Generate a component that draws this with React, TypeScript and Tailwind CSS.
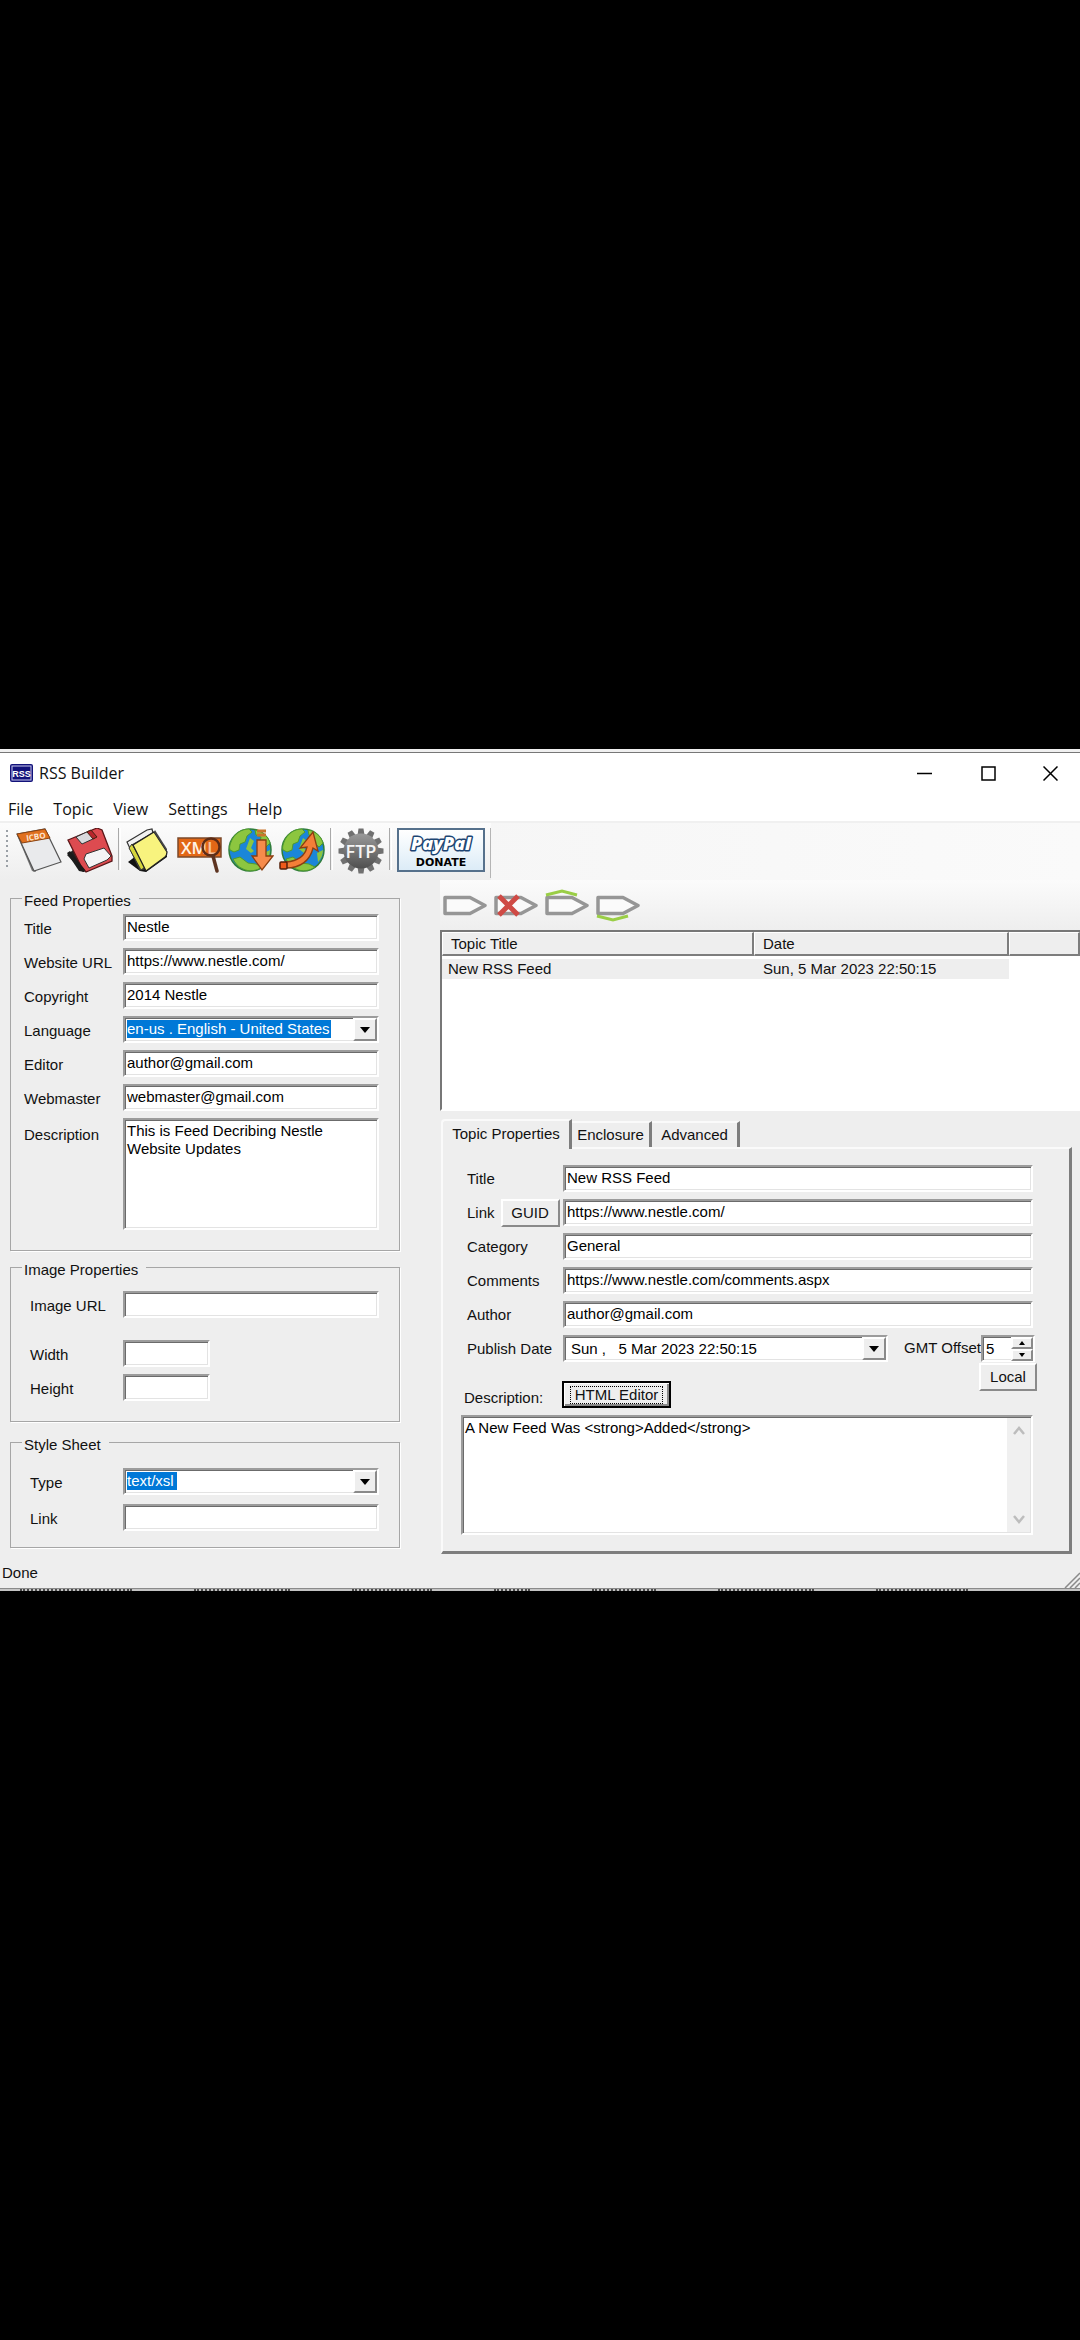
import React from "react";

const field =
  "border-2 border-t-[#9c9c9c] border-l-[#9c9c9c] border-r-white border-b-white bg-white shadow-[inset_1px_1px_0_#6b6b6b,inset_-1px_-1px_0_#e3e3e3] text-[15px] leading-[18px] text-black outline-none rounded-none";
const raised =
  "border-2 border-t-white border-l-white border-r-[#8a8a8a] border-b-[#8a8a8a] bg-[#eeeeee] flex items-center justify-center text-[15px] leading-[18px]";

function Arrow() {
  return (
    <svg width="10" height="6" viewBox="0 0 10 6" aria-hidden="true">
      <path d="M0 0h10L5 6z" fill="#000" />
    </svg>
  );
}

function Field({ id, value = "", className = "" }: { id: string; value?: string; className?: string }) {
  return <input id={id} defaultValue={value} className={`${field} block h-[27px] w-full min-w-0 px-[2px] pb-[2px] ${className}`} />;
}

function Combo({ id, value, width }: { id: string; value: string; width: string }) {
  return (
    <div className={`${field} flex h-[27px] items-start justify-between pl-[2px]`}>
      <select id={id} className={`mt-[2px] h-[18px] appearance-none bg-[#0078d7] text-[15px] leading-[18px] text-white ${width}`}>
        <option>{value}</option>
      </select>
      <button aria-label="Open list" className={`${raised} h-[23px] w-6`}>
        <Arrow />
      </button>
    </div>
  );
}

function Group({ title, className, children }: { title: string; className: string; children: React.ReactNode }) {
  return (
    <fieldset className={`border border-[#a6a6a6] pr-5 pl-[13px] shadow-[1px_1px_0_#fff] ${className}`}>
      <legend className="-ml-[2px] pt-[6px] pr-2 pl-[2px] leading-[18px]">{title}</legend>
      {children}
    </fieldset>
  );
}

const row = "grid grid-cols-[99px_minmax(0,1fr)]";
const lab = "pt-[6px] whitespace-nowrap leading-[18px]";
const labIn = "pt-[6px] pl-[6px] whitespace-nowrap leading-[18px]";

function LeftColumn() {
  return (
    <div className="w-[440px] shrink-0 pt-[6px] pr-10 pl-[10px]">
      <Group title="Feed Properties" className="pb-5">
        <div className={`${row} gap-y-[7px] pt-1`}>
          <label htmlFor="f-title" className={lab}>Title</label>
          <Field id="f-title" value="Nestle" />
          <label htmlFor="f-url" className={lab}>Website URL</label>
          <Field id="f-url" value="https://www.nestle.com/" />
          <label htmlFor="f-copy" className={lab}>Copyright</label>
          <Field id="f-copy" value="2014 Nestle" />
          <label htmlFor="f-lang" className={lab}>Language</label>
          <Combo id="f-lang" value="en-us . English - United States" width="w-[204px]" />
          <label htmlFor="f-editor" className={lab}>Editor</label>
          <Field id="f-editor" value="author@gmail.com" />
          <label htmlFor="f-web" className={lab}>Webmaster</label>
          <Field id="f-web" value="webmaster@gmail.com" />
          <label htmlFor="f-desc" className="pt-2 leading-[18px]">Description</label>
          <textarea
            id="f-desc"
            defaultValue={"This is Feed Decribing Nestle\nWebsite Updates"}
            className={`${field} block h-[112px] w-full resize-none px-[2px] pt-[2px]`}
          />
        </div>
      </Group>

      <Group title="Image Properties" className="mt-1 pb-5">
        <div className={`${row} pt-3`}>
          <label htmlFor="i-url" className={labIn}>Image URL</label>
          <Field id="i-url" />
        </div>
        <div className={`${row} gap-y-[7px] pt-[22px]`}>
          <label htmlFor="i-w" className={labIn}>Width</label>
          <Field id="i-w" className="max-w-[87px]" />
          <label htmlFor="i-h" className={labIn}>Height</label>
          <Field id="i-h" className="max-w-[87px]" />
        </div>
      </Group>

      <Group title="Style Sheet" className="mt-2 pb-4">
        <div className={`${row} gap-y-[9px] pt-[14px]`}>
          <label htmlFor="s-type" className={labIn}>Type</label>
          <Combo id="s-type" value="text/xsl" width="w-[50px]" />
          <label htmlFor="s-link" className={labIn}>Link</label>
          <Field id="s-link" />
        </div>
      </Group>
    </div>
  );
}

function Sep() {
  return <span className="h-[42px] w-[3px] shrink-0 border-r border-l border-l-[#a9a9a9] border-r-white" />;
}

function Globe() {
  return (
    <>
      <circle cx="22" cy="22" r="21" fill="#1b86d8" stroke="#2f7d3a" strokeWidth="1.5" />
      <path d="M3 14C6 6 13 1 21 1l3 3-5 4-2 6-5 2-1 6-5 2-4-2c-1-3 0-5 1-8z" fill="#8cc63f" stroke="#4f9a2e" />
      <path d="M27 2c7 1 13 6 15 13l-4 4-6-5 1-5-5-2z" fill="#8cc63f" stroke="#4f9a2e" />
      <path d="M5 31l7-2 8 6 8 1 6 3c-5 4-13 5-19 2-5-2-8-6-10-10z" fill="#8cc63f" stroke="#4f9a2e" />
      <path d="M22 10l4 3-3 7 3 3-3 2-5-4z" fill="#8cc63f" />
      <path d="M36 25l6-3c0 5-2 9-5 12z" fill="#8cc63f" />
    </>
  );
}

function Gear() {
  const teeth = [0, 30, 60, 90, 120, 150, 180, 210, 240, 270, 300, 330];
  return (
    <svg width="46" height="46" viewBox="0 0 46 46" aria-hidden="true">
      <defs>
        <linearGradient id="gear" x1="0" y1="0" x2="0" y2="1">
          <stop offset="0" stopColor="#9a9a9a" />
          <stop offset="1" stopColor="#4f4f4f" />
        </linearGradient>
      </defs>
      {teeth.map((a) => (
        <path key={a} d="M20.5 0.5h5l1 7h-7z" fill="#707070" transform={`rotate(${a} 23 23)`} />
      ))}
      <circle cx="23" cy="23" r="17.5" fill="url(#gear)" />
      <text x="23" y="29.5" textAnchor="middle" fontFamily="Open Sans, sans-serif" fontSize="18" fontWeight="600" fill="#f4f4f4">FTP</text>
    </svg>
  );
}

function Toolbar() {
  return (
    <div className="flex border-t-2 border-[#f0f0f0] bg-gradient-to-r from-[#f3f3f3] to-[#fafafa]">
      <div className="flex h-[57px] items-start gap-[5px] bg-gradient-to-b from-[#fcfcfc] to-[#eeeeee] pt-[5px] pl-[5px]">
        <svg width="6" height="44" viewBox="0 0 6 44" aria-hidden="true">
          <path d="M2 2v38" stroke="#9aa0a6" strokeWidth="2" strokeDasharray="2 3" />
        </svg>
        <button aria-label="New feed">
          <svg width="46" height="46" viewBox="0 0 46 46" aria-hidden="true">
            <path d="M1 7l4 3 15 34-4-1z" fill="#777" />
            <path d="M1 6L29 1l16 33-27 9z" fill="#e9eaec" stroke="#555" strokeWidth="1.2" />
            <path d="M1 6L29 1l5 9-28 5z" fill="#e0701f" stroke="#8a4312" strokeWidth="1" />
            <text x="10" y="12" transform="rotate(-9 17 8)" fontFamily="Open Sans, sans-serif" fontSize="8" fontWeight="700" fill="#fbe6d2">ICBO</text>
          </svg>
        </button>
        <button aria-label="Save">
          <svg width="46" height="46" viewBox="0 0 46 46" aria-hidden="true">
            <path d="M0 27l6-5 14 21-4 1z" fill="#222" />
            <path d="M1 12L30 0l5 2 10 26v5L19 44l-5-6z" fill="#dd4b50" stroke="#5a1517" strokeWidth="1.3" />
            <path d="M9 9l13-6 6 7-13 6z" fill="#d9dadd" stroke="#333" />
            <path d="M20 4l4-2 6 7-4 2z" fill="#b8262c" stroke="#421" />
            <path d="M17 31l2-5 18-6 7 8-4 4-18 8z" fill="#f4f4f6" stroke="#333" />
            <path d="M0 25l3-2 15 19-1 2-5-1z" fill="#1b1b1b" />
          </svg>
        </button>
        <Sep />
        <button aria-label="Templates">
          <svg width="46" height="46" viewBox="0 0 46 46" aria-hidden="true">
            <path d="M2 34l8-6 31-3v4L20 44l-6-1z" fill="#111" />
            <path d="M1 14L21 2l5-1 1 4-21 12 12 24-4 1z" fill="#f2f2f2" stroke="#333" strokeWidth="1.2" />
            <path d="M3 20l3-4 13 23-4 3z" fill="#d5d53c" stroke="#333" />
            <path d="M7 17L28 4l13 20c0 3-1 4-2 5L20 43z" fill="#f8f37e" stroke="#222" strokeWidth="1.3" />
            <path d="M28 4l1-2 12 19v3z" fill="#444" />
          </svg>
        </button>
        <button aria-label="View XML">
          <svg width="46" height="46" viewBox="0 0 46 46" aria-hidden="true">
            <rect x="1" y="10" width="43" height="19" fill="#e26716" stroke="#7b4a2b" strokeWidth="1.5" />
            <text x="4" y="26" fontFamily="Open Sans, sans-serif" fontSize="17" fontWeight="600" fill="#fff3e6">XML</text>
            <circle cx="34" cy="19" r="8.5" fill="#e26716" fillOpacity="0.35" stroke="#5d2c16" strokeWidth="2.5" />
            <path d="M36 28l4 15" stroke="#5d3420" strokeWidth="3.5" strokeLinecap="round" />
          </svg>
        </button>
        <button aria-label="Download feed">
          <svg width="46" height="46" viewBox="0 0 46 46" aria-hidden="true">
            <Globe />
            <path d="M29 12h9v16h7L34 42 24 28h5z" fill="#f68b4b" stroke="#8b3e10" strokeWidth="1.3" />
            <path d="M29 3h9M29 7h9" stroke="#c9742a" strokeWidth="3" />
          </svg>
        </button>
        <button aria-label="Publish feed">
          <svg width="46" height="46" viewBox="0 0 46 46" aria-hidden="true">
            <g transform="translate(2 0)"><Globe /></g>
            <path d="M7 34c12-1 19-6 21-15l-7 1L34 4l5 19-5-3c-3 13-13 20-27 20z" fill="#f47f38" stroke="#8b3e10" strokeWidth="1.3" />
            <rect x="1" y="34" width="7" height="7" rx="1" fill="#f05a1a" stroke="#54200a" strokeWidth="1.5" />
          </svg>
        </button>
        <Sep />
        <button aria-label="FTP"><Gear /></button>
        <Sep />
        <button className="flex h-11 w-[88px] flex-col items-center border-2 border-[#56718c] bg-gradient-to-b from-white to-[#dcecf7]">
          <svg width="84" height="27" viewBox="0 0 84 27" className="overflow-visible" aria-hidden="true">
            <text x="42" y="20" textAnchor="middle" fontFamily="Open Sans, sans-serif" fontSize="18" fontWeight="800" fontStyle="italic" fill="#fff" stroke="#1d4573" strokeWidth="3" paintOrder="stroke" strokeLinejoin="round">PayPal</text>
          </svg>
          <span className="font-['DejaVu_Sans',sans-serif] text-[11px] leading-3 font-bold text-black">DONATE</span>
        </button>
        <span className="h-[50px] w-px bg-[#b5b5b5]" />
      </div>
    </div>
  );
}

const tag = "M2 8.5h25l15 8-15 8H2z";

function TopicTools() {
  const tools = [
    { name: "Add topic", extra: null },
    { name: "Delete topic", extra: <path d="M5 7l19 19M24 7L5 26" stroke="#cf4a45" strokeWidth="5" fill="none" /> },
    { name: "Move topic up", extra: <path d="M1 6l16-4 15 4" stroke="#9ace46" strokeWidth="3" fill="none" /> },
    { name: "Move topic down", extra: <path d="M1 27l16 4 15-4" stroke="#9ace46" strokeWidth="3" fill="none" /> },
  ];
  return (
    <div className="flex h-[50px] items-center gap-[7px] bg-gradient-to-b from-[#fbfbfb] to-[#eeeeee] pl-[3px]">
      {tools.map((t) => (
        <button key={t.name} aria-label={t.name}>
          <svg width="44" height="33" viewBox="0 0 44 33" aria-hidden="true">
            <path d={tag} fill="#fafafa" stroke="#969696" strokeWidth="3.5" strokeLinejoin="round" />
            {t.extra}
          </svg>
        </button>
      ))}
    </div>
  );
}

const th = "h-6 border-t border-l border-r-2 border-b-2 border-t-white border-l-white border-r-[#7d7d7d] border-b-[#7d7d7d] bg-[#eeeeee] pl-2 text-left font-normal";

function TopicList() {
  return (
    <div className="h-[181px] border-t-2 border-b-2 border-l-2 border-t-[#777] border-l-[#777] border-b-white bg-white">
      <table className="w-full table-fixed border-separate border-spacing-0 leading-[18px]">
        <colgroup>
          <col className="w-[312px]" />
          <col className="w-[255px]" />
          <col />
        </colgroup>
        <thead>
          <tr>
            <th className={th}>Topic Title</th>
            <th className={th}>Date</th>
            <th aria-label="Empty" className={th} />
          </tr>
        </thead>
        <tbody>
          <tr><td className="h-[3px]" colSpan={3} /></tr>
          <tr>
            <td className="h-5 bg-[#eeeeee] pl-[6px]">New RSS Feed</td>
            <td className="bg-[#eeeeee] pl-[9px]">Sun, 5 Mar 2023 22:50:15</td>
            <td />
          </tr>
        </tbody>
      </table>
    </div>
  );
}

function Tabs() {
  const off = "h-[26px] border-t-2 border-r-[3px] border-t-[#fafafa] border-r-[#7d7d7d] pb-px text-center";
  return (
    <div role="tablist" className="flex items-end pl-px leading-[18px]">
      <button role="tab" aria-selected="true" className="relative z-10 -mb-[2px] h-[30px] w-[131px] rounded-tl-sm border-t-2 border-r-[3px] border-l-2 border-t-[#fafafa] border-r-[#7d7d7d] border-l-[#fafafa] bg-[#eeeeee] pb-[2px]">Topic Properties</button>
      <button role="tab" aria-selected="false" className={`${off} w-20`}>Enclosure</button>
      <button role="tab" aria-selected="false" className={`${off} w-[88px]`}>Advanced</button>
    </div>
  );
}

const rlab = "flex h-[27px] items-center whitespace-nowrap pl-[6px] leading-[18px]";

function TopicForm() {
  return (
    <div className="mr-2 ml-px border-t-2 border-r-[3px] border-b-[3px] border-l-2 border-t-[#fafafa] border-r-[#7d7d7d] border-b-[#7d7d7d] border-l-[#fafafa] pt-4 pr-9 pb-4 pl-[18px]">
      <div className="grid grid-cols-[102px_minmax(0,1fr)] gap-y-[7px]">
        <label htmlFor="t-title" className={rlab}>Title</label>
        <Field id="t-title" value="New RSS Feed" />
        <div className={rlab}>
          <label htmlFor="t-link">Link</label>
          <button className={`${raised} ml-[6px] h-7 w-[59px] shrink-0`}>GUID</button>
        </div>
        <Field id="t-link" value="https://www.nestle.com/" />
        <label htmlFor="t-cat" className={rlab}>Category</label>
        <Field id="t-cat" value="General" />
        <label htmlFor="t-com" className={rlab}>Comments</label>
        <Field id="t-com" value="https://www.nestle.com/comments.aspx" />
        <label htmlFor="t-author" className={rlab}>Author</label>
        <Field id="t-author" value="author@gmail.com" />
        <label htmlFor="t-date" className={rlab}>Publish Date</label>
        <div className="flex items-center">
          <div className={`${field} flex h-[27px] min-w-0 grow items-center`}>
            <input id="t-date" defaultValue="Sun ,   5 Mar 2023 22:50:15" className="min-w-0 grow pl-[6px] outline-none" />
            <button aria-label="Open calendar" className={`${raised} h-[23px] w-6`}><Arrow /></button>
          </div>
          <label htmlFor="t-gmt" className="pl-4 whitespace-nowrap">GMT Offset</label>
          <div className={`${field} -mr-[2px] flex h-[27px] w-[54px] shrink-0 items-center`}>
            <input id="t-gmt" defaultValue="5" className="w-7 min-w-0 grow pl-[3px] outline-none" />
            <div className="flex flex-col">
              <button aria-label="Increase" className={`${raised} h-3 w-[22px]`}>
                <svg width="6" height="4" viewBox="0 0 6 4" aria-hidden="true"><path d="M0 4h6L3 0z" /></svg>
              </button>
              <button aria-label="Decrease" className={`${raised} h-3 w-[22px]`}>
                <svg width="6" height="4" viewBox="0 0 6 4" aria-hidden="true"><path d="M0 0h6L3 4z" /></svg>
              </button>
            </div>
          </div>
        </div>
      </div>
      <div className="flex h-[46px] items-start pt-px">
        <label htmlFor="t-desc" className="w-[101px] self-end pb-[1px] pl-[3px] leading-[18px]">Description:</label>
        <button className="flex h-[27px] w-[109px] items-center justify-center self-end border-2 border-black bg-[#eeeeee] p-[2px] leading-[18px] shadow-[inset_1px_1px_0_#fff,inset_-2px_-2px_0_#8a8a8a]">
          <span className="border border-dotted border-black px-1 leading-4">HTML Editor</span>
        </button>
        <button className={`${raised} -mr-1 ml-auto h-7 w-[58px]`}>Local</button>
      </div>
      <div className={`${field} mt-[7px] flex h-[120px]`}>
        <textarea id="t-desc" defaultValue="A New Feed Was <strong>Added</strong>" className="min-w-0 grow resize-none pt-[2px] pl-[2px] outline-none" />
        <div className="my-px mr-px flex w-[23px] flex-col items-center justify-between bg-[#f0f0f0] py-2 text-[#bdbdbd]">
          <button aria-label="Scroll up">
            <svg width="12" height="10" viewBox="0 0 12 10" className="block" aria-hidden="true"><path d="M1 8l5-6 5 6" fill="none" stroke="currentColor" strokeWidth="2.5" /></svg>
          </button>
          <button aria-label="Scroll down">
            <svg width="12" height="10" viewBox="0 0 12 10" className="block" aria-hidden="true"><path d="M1 2l5 6 5-6" fill="none" stroke="currentColor" strokeWidth="2.5" /></svg>
          </button>
        </div>
      </div>
    </div>
  );
}

function TitleBar() {
  return (
    <div className="flex h-10 items-center bg-white pl-[10px] font-['Open_Sans','Noto_Sans',sans-serif] text-[16px] leading-5">
      <svg width="23" height="18" viewBox="0 0 23 18" aria-hidden="true">
        <rect width="23" height="18" rx="2" fill="#12127a" />
        <rect x="2" y="2" width="19" height="14" fill="none" stroke="#c9c9ee" />
        <text x="11.5" y="12.5" textAnchor="middle" fontFamily="Liberation Sans, sans-serif" fontSize="9" fontWeight="700" fill="#fff">RSS</text>
      </svg>
      <h1 className="ml-[6px] grow">RSS Builder</h1>
      <button aria-label="Minimize" className="flex w-16 justify-center">
        <svg width="15" height="15" viewBox="0 0 15 15"><path d="M0 7.5h15" stroke="#000" strokeWidth="1.5" /></svg>
      </button>
      <button aria-label="Maximize" className="flex w-16 justify-center">
        <svg width="15" height="15" viewBox="0 0 15 15"><rect x="1" y="1" width="13" height="13" fill="none" stroke="#000" strokeWidth="1.5" /></svg>
      </button>
      <button aria-label="Close" className="flex w-[60px] justify-center">
        <svg width="15" height="15" viewBox="0 0 15 15"><path d="M0.5 0.5l14 14M14.5 0.5l-14 14" stroke="#000" strokeWidth="1.5" /></svg>
      </button>
    </div>
  );
}

/* Sliver of the window behind, showing under the bottom edge. */
function BackgroundSliver() {
  return (
    <div className="flex h-[3px] justify-between border-t border-[#8a8a8a] bg-[#c4c4c4] pr-28 pl-5">
      <span className="w-28 border-t-2 border-dotted border-[#4a4a4a]" />
      <span className="w-24 border-t-2 border-dotted border-[#4a4a4a]" />
      <span className="w-20 border-t-2 border-dotted border-[#4a4a4a]" />
      <span className="w-9 border-t-2 border-dotted border-[#4a4a4a]" />
      <span className="w-16 border-t-2 border-dotted border-[#4a4a4a]" />
      <span className="w-24 border-t-2 border-dotted border-[#4a4a4a]" />
      <span className="w-[92px] border-t-2 border-dotted border-[#4a4a4a]" />
    </div>
  );
}

export default function App() {
  return (
    <div className="flex min-h-screen flex-col justify-center bg-black">
      <main className="overflow-hidden border-t-[3px] border-t-[#f0f0f0] bg-[#eeeeee] font-['Liberation_Sans',Arial,sans-serif] text-[15px] text-[#111]">
        <div className="border-t border-[#777]">
          <TitleBar />
          <nav className="flex h-7 items-center gap-5 bg-white pt-[3px] pl-2 font-['Open_Sans','Noto_Sans',sans-serif] text-[16px] leading-5">
            <button>File</button>
            <button>Topic</button>
            <button>View</button>
            <button>Settings</button>
            <button>Help</button>
          </nav>
          <Toolbar />
          <div className="flex">
            <LeftColumn />
            <div className="min-w-0 grow">
              <TopicTools />
              <TopicList />
              <div className="h-2" />
              <Tabs />
              <TopicForm />
            </div>
          </div>
          <footer className="flex h-[34px] items-end justify-between pl-[2px]">
            <span className="pb-[6px] leading-[18px]">Done</span>
            <svg width="16" height="16" viewBox="0 0 16 16" aria-hidden="true">
              <path d="M1 16L16 1M6 16L16 6M11 16l5-5" stroke="#8a8a8a" strokeWidth="1.5" />
            </svg>
          </footer>
          <BackgroundSliver />
        </div>
      </main>
    </div>
  );
}
